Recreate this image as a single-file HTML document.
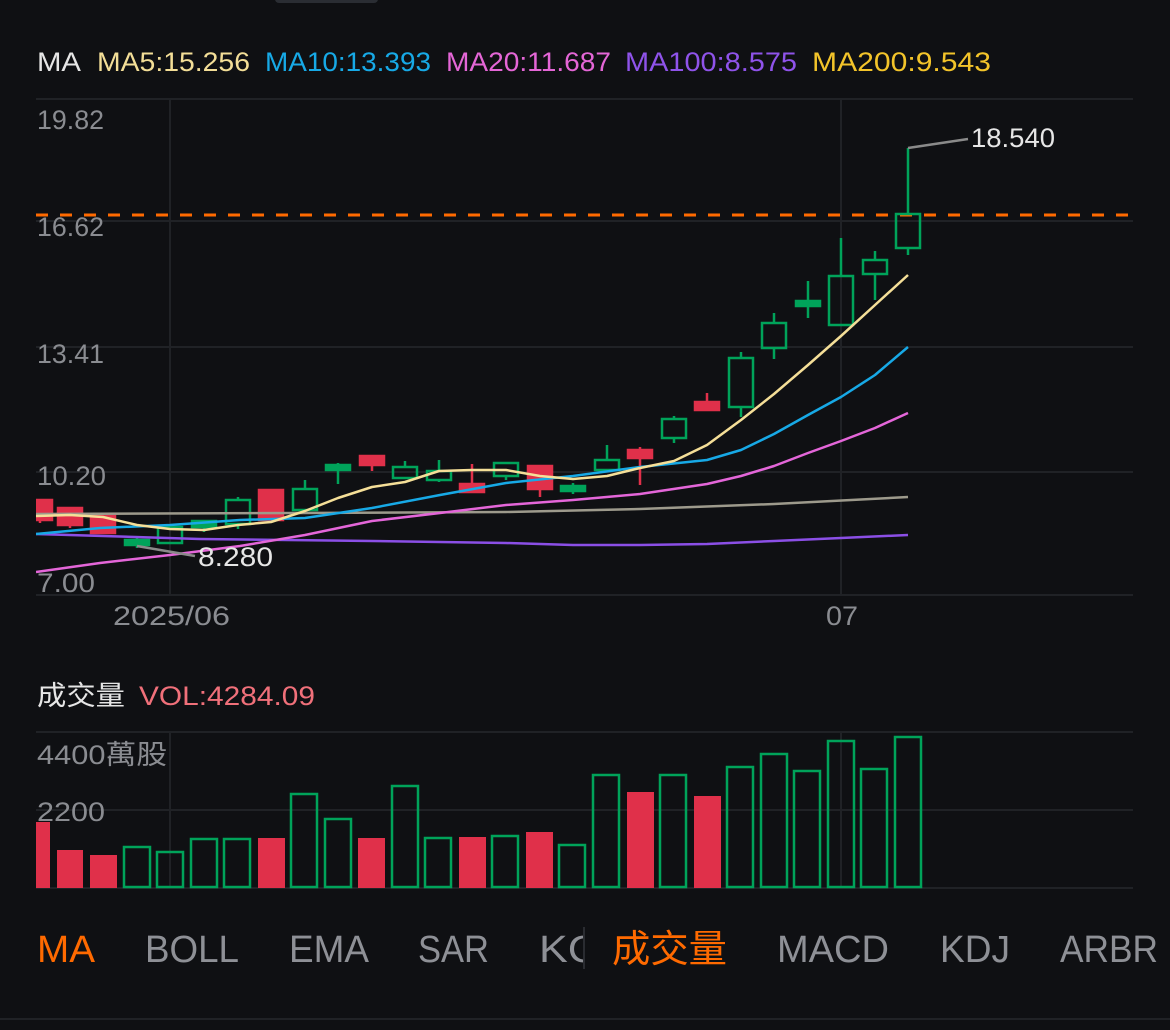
<!DOCTYPE html>
<html><head><meta charset="utf-8"><style>
html,body{margin:0;padding:0;background:#0f1013;}
svg{display:block}
text{font-family:"Liberation Sans","Noto Sans CJK TC",sans-serif;}
</style></head><body>
<svg width="1170" height="1030" viewBox="0 0 1170 1030" xmlns="http://www.w3.org/2000/svg">
<rect width="1170" height="1030" fill="#0f1013"/>
<rect x="275" y="-6" width="103" height="9" rx="4" fill="#2a2d33"/>
<g font-size="27">
<text x="37" y="71" fill="#e6e6e6" textLength="44" lengthAdjust="spacingAndGlyphs">MA</text>
<text x="97" y="71" fill="#f3de97" textLength="153" lengthAdjust="spacingAndGlyphs">MA5:15.256</text>
<text x="265" y="71" fill="#17a9e6" textLength="166" lengthAdjust="spacingAndGlyphs">MA10:13.393</text>
<text x="446" y="71" fill="#e466d6" textLength="165" lengthAdjust="spacingAndGlyphs">MA20:11.687</text>
<text x="625" y="71" fill="#8f53ea" textLength="172" lengthAdjust="spacingAndGlyphs">MA100:8.575</text>
<text x="812" y="71" fill="#f3c42a" textLength="179" lengthAdjust="spacingAndGlyphs">MA200:9.543</text>
</g>
<g stroke="#202226" stroke-width="2">
<line x1="36" y1="99" x2="1133" y2="99"/>
<line x1="36" y1="221" x2="1133" y2="221"/>
<line x1="36" y1="347" x2="1133" y2="347"/>
<line x1="36" y1="472" x2="1133" y2="472"/>
<line x1="36" y1="595" x2="1133" y2="595"/>
<line x1="170" y1="99" x2="170" y2="595"/>
<line x1="841" y1="99" x2="841" y2="595"/>
<line x1="36" y1="732" x2="1133" y2="732"/>
<line x1="36" y1="810" x2="1133" y2="810"/>
<line x1="36" y1="888" x2="1133" y2="888"/>
<line x1="170" y1="732" x2="170" y2="888"/>
<line x1="841" y1="732" x2="841" y2="888"/>
</g>
<g font-size="27" fill="#8a8c91">
<text x="37" y="129" textLength="67" lengthAdjust="spacingAndGlyphs">19.82</text>
<text x="37" y="236" textLength="67" lengthAdjust="spacingAndGlyphs">16.62</text>
<text x="37" y="363" textLength="67" lengthAdjust="spacingAndGlyphs">13.41</text>
<text x="37" y="485" textLength="69" lengthAdjust="spacingAndGlyphs">10.20</text>
<text x="37" y="592" textLength="58" lengthAdjust="spacingAndGlyphs">7.00</text>
<text x="113" y="625" textLength="117" lengthAdjust="spacingAndGlyphs">2025/06</text>
<text x="826" y="625" textLength="32" lengthAdjust="spacingAndGlyphs">07</text>
</g>
<line x1="36" y1="215" x2="1133" y2="215" stroke="#ff6a00" stroke-width="3" stroke-dasharray="12,12"/>
<svg x="36" y="90" width="1100" height="510" viewBox="36 90 1100 510" overflow="hidden">
<g stroke-width="2.5">
<g fill="#e0304a" stroke="#e0304a">
<line x1="40" y1="500" x2="40" y2="523"/><rect x="28" y="500" width="24" height="20"/>
<line x1="70" y1="508" x2="70" y2="528"/><rect x="58" y="508" width="24" height="17"/>
<line x1="103" y1="516" x2="103" y2="533"/><rect x="91" y="516" width="24" height="17"/>
<rect x="259" y="490" width="24" height="30"/>
<line x1="372" y1="456" x2="372" y2="471"/><rect x="360" y="456" width="24" height="9"/>
<line x1="472" y1="464" x2="472" y2="492"/><rect x="460" y="484" width="24" height="8"/>
<line x1="540" y1="466" x2="540" y2="497"/><rect x="528" y="466" width="24" height="23"/>
<line x1="640" y1="447" x2="640" y2="485"/><rect x="628" y="450" width="24" height="8"/>
<line x1="707" y1="393" x2="707" y2="411"/><rect x="695" y="402" width="24" height="8"/>
</g>
<g fill="#00a35a" stroke="#00a35a">
<line x1="137" y1="538" x2="137" y2="548"/><rect x="125" y="540" width="24" height="5"/>
<line x1="338" y1="463" x2="338" y2="484"/><rect x="326" y="465" width="24" height="5"/>
<line x1="573" y1="483" x2="573" y2="494"/><rect x="561" y="486" width="24" height="5"/>
<line x1="808" y1="281" x2="808" y2="318"/><rect x="796" y="301" width="24" height="5"/>
<line x1="204" y1="520" x2="204" y2="532"/><rect x="192" y="521" width="24" height="6"/>
</g>
<g fill="none" stroke="#00a35a">
<rect x="158" y="527" width="24" height="16"/>
<line x1="238" y1="497" x2="238" y2="500"/><line x1="238" y1="524" x2="238" y2="529"/><rect x="226" y="500" width="24" height="24"/>
<line x1="305" y1="480" x2="305" y2="489"/><rect x="293" y="489" width="24" height="21"/>
<line x1="405" y1="461" x2="405" y2="467"/><rect x="393" y="467" width="24" height="11"/>
<line x1="439" y1="460" x2="439" y2="471"/><line x1="439" y1="480" x2="439" y2="482"/><rect x="427" y="471" width="24" height="9"/>
<line x1="506" y1="476" x2="506" y2="480"/><rect x="494" y="463" width="24" height="13"/>
<line x1="607" y1="445" x2="607" y2="460"/><rect x="595" y="460" width="24" height="10"/>
<line x1="674" y1="416" x2="674" y2="419"/><line x1="674" y1="438" x2="674" y2="443"/><rect x="662" y="419" width="24" height="19"/>
<line x1="741" y1="352" x2="741" y2="358"/><line x1="741" y1="407" x2="741" y2="417"/><rect x="729" y="358" width="24" height="49"/>
<line x1="774" y1="313" x2="774" y2="323"/><line x1="774" y1="348" x2="774" y2="359"/><rect x="762" y="323" width="24" height="25"/>
<line x1="841" y1="238" x2="841" y2="276"/><rect x="829" y="276" width="24" height="49"/>
<line x1="875" y1="251" x2="875" y2="260"/><line x1="875" y1="274" x2="875" y2="300"/><rect x="863" y="260" width="24" height="14"/>
<line x1="908" y1="148" x2="908" y2="214"/><line x1="908" y1="248" x2="908" y2="255"/><rect x="896" y="214" width="24" height="34"/>
</g>
</g>
<g fill="none" stroke-width="2.5" stroke-linejoin="round">
<polyline stroke="#9d9a8c" points="36,514 300,513 506,512 640,509 774,504 908,497"/>
<polyline stroke="#8b4fe6" points="36,534 200,539 372,541 506,543 573,545 640,545 707,544 774,541 841,538 908,535"/>
<polyline stroke="#e466d9" points="36,572 100,563 170,555 240,546 305,535 372,521 440,513 506,505 573,500 640,494 707,484 741,476 774,466 808,453 841,441 875,428 908,413"/>
<polyline stroke="#17a9e6" points="36,534 100,528 170,525 240,520 305,518 372,508 440,495 506,483 573,476 640,467 707,460 741,450 774,434 808,415 841,397 875,375 908,347"/>
<polyline stroke="#f5df98" points="36,516 70,515 103,517 137,525 170,529 204,530 238,525 271,522 305,511 338,498 372,487 405,482 439,471 472,470 506,470 540,476 573,479 607,476 640,468 674,461 707,445 741,420 774,394 808,365 841,336 875,305 908,275"/>
</g>
</svg>
<polyline fill="none" stroke="#8a8a8a" stroke-width="2.5" points="908,148 968,139"/>
<polyline fill="none" stroke="#8a8a8a" stroke-width="2.5" points="137,546 195,556"/>
<g font-size="27" fill="#e6e6e6">
<text x="971" y="147" textLength="84" lengthAdjust="spacingAndGlyphs">18.540</text>
<text x="198" y="566" textLength="75" lengthAdjust="spacingAndGlyphs">8.280</text>
</g>
<text x="37" y="705" font-size="27" fill="#e6e6e6" textLength="88" lengthAdjust="spacingAndGlyphs">成交量</text>
<text x="139" y="705" font-size="27" fill="#f0707a" textLength="176" lengthAdjust="spacingAndGlyphs">VOL:4284.09</text>
<text x="37" y="764" font-size="27" fill="#8a8c91" textLength="130" lengthAdjust="spacingAndGlyphs">4400萬股</text>
<text x="37" y="821" font-size="27" fill="#8a8c91" textLength="68" lengthAdjust="spacingAndGlyphs">2200</text>
<svg x="36" y="700" width="1100" height="190" viewBox="36 700 1100 190">
<g fill="#e0304a">
<rect x="26" y="822" width="24" height="66"/>
<rect x="57" y="850" width="26" height="38"/>
<rect x="90" y="855" width="27" height="33"/>
<rect x="258" y="838" width="27" height="50"/>
<rect x="358" y="838" width="27" height="50"/>
<rect x="459" y="837" width="27" height="51"/>
<rect x="526" y="832" width="27" height="56"/>
<rect x="627" y="792" width="27" height="96"/>
<rect x="694" y="796" width="27" height="92"/>
</g>
<g fill="none" stroke="#00a35a" stroke-width="2.5">
<rect x="124" y="847" width="26" height="40"/>
<rect x="157" y="852" width="26" height="35"/>
<rect x="191" y="839" width="26" height="48"/>
<rect x="224" y="839" width="26" height="48"/>
<rect x="291" y="794" width="26" height="93"/>
<rect x="325" y="819" width="26" height="68"/>
<rect x="392" y="786" width="26" height="101"/>
<rect x="425" y="838" width="26" height="49"/>
<rect x="492" y="836" width="26" height="51"/>
<rect x="559" y="845" width="26" height="42"/>
<rect x="593" y="775" width="26" height="112"/>
<rect x="660" y="775" width="26" height="112"/>
<rect x="727" y="767" width="26" height="120"/>
<rect x="761" y="754" width="26" height="133"/>
<rect x="794" y="771" width="26" height="116"/>
<rect x="828" y="741" width="26" height="146"/>
<rect x="861" y="769" width="26" height="118"/>
<rect x="895" y="737" width="26" height="150"/>
</g>
</svg>
<g font-size="38">
<text x="37" y="962" fill="#ff6a00" textLength="58" lengthAdjust="spacingAndGlyphs">MA</text>
<text x="145" y="962" fill="#8e9096" textLength="94" lengthAdjust="spacingAndGlyphs">BOLL</text>
<text x="289" y="962" fill="#8e9096" textLength="80" lengthAdjust="spacingAndGlyphs">EMA</text>
<text x="418" y="962" fill="#8e9096" textLength="71" lengthAdjust="spacingAndGlyphs">SAR</text>
<svg x="530" y="920" width="53" height="60"><text x="9" y="42" font-size="38" fill="#8e9096" textLength="60" lengthAdjust="spacingAndGlyphs">KC</text></svg>
<line x1="584" y1="927" x2="584" y2="969" stroke="#2a2c31" stroke-width="2"/>
<text x="612" y="962" fill="#ff6a00" textLength="115" lengthAdjust="spacingAndGlyphs">成交量</text>
<text x="777" y="962" fill="#8e9096" textLength="112" lengthAdjust="spacingAndGlyphs">MACD</text>
<text x="940" y="962" fill="#8e9096" textLength="70" lengthAdjust="spacingAndGlyphs">KDJ</text>
<text x="1060" y="962" fill="#8e9096" textLength="98" lengthAdjust="spacingAndGlyphs">ARBR</text>
</g>
<line x1="0" y1="1019" x2="1170" y2="1019" stroke="#202226" stroke-width="2"/>
</svg>
</body></html>
